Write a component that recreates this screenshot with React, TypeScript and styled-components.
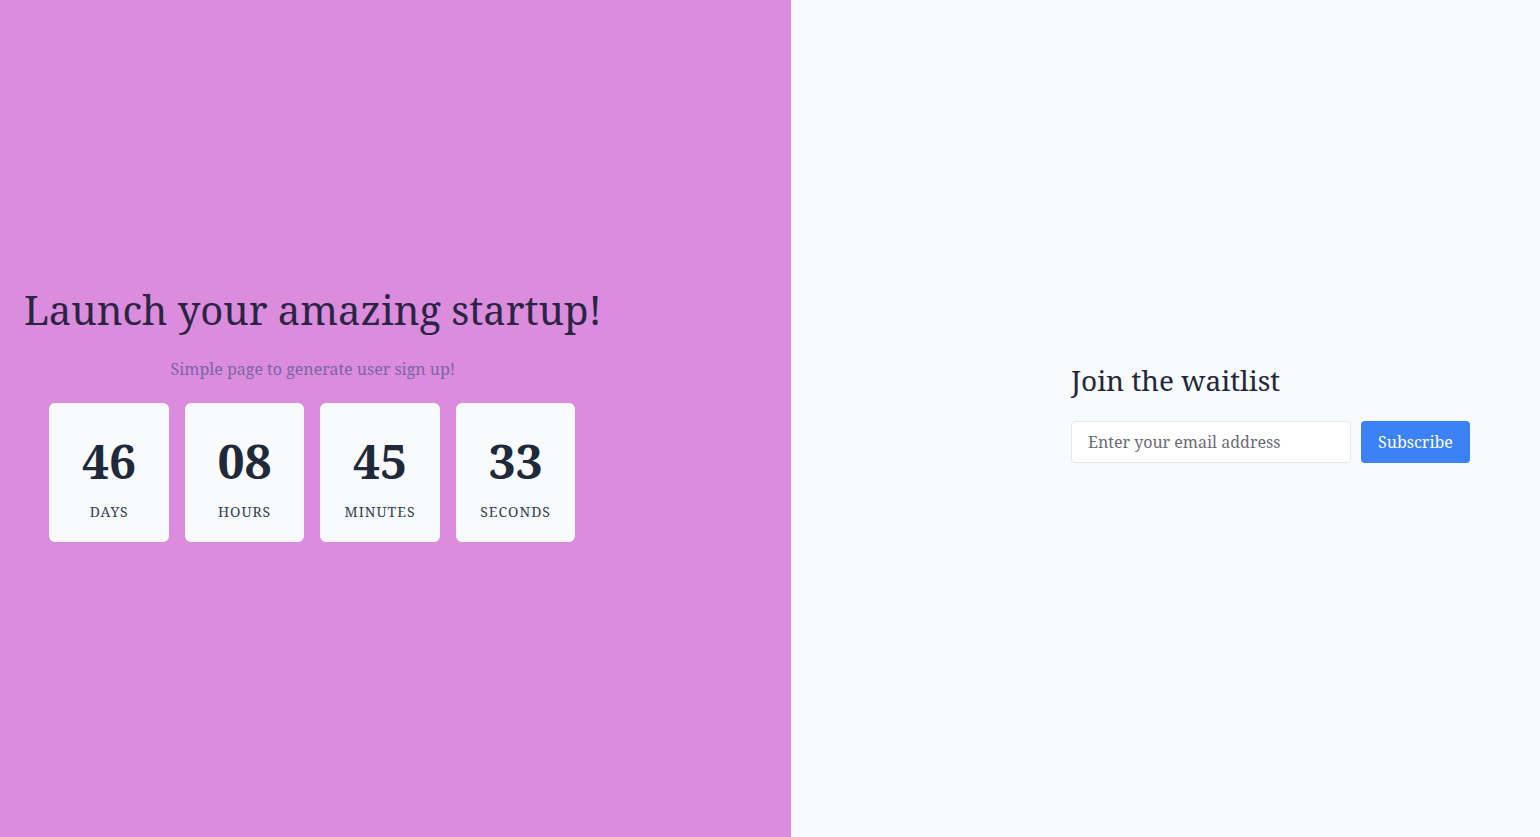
import React from "react";
import styled, { createGlobalStyle } from "styled-components";

const Global = createGlobalStyle`
  html, body { margin: 0; padding: 0; }
  body { font-family: "Noto Serif", "DejaVu Serif", "Liberation Serif", serif; }
  * { box-sizing: border-box; }
`;

const Page = styled.div`
  display: flex;
  width: 100%;
  height: 837px;
`;

const LeftPanel = styled.section`
  width: 791px;
  flex-shrink: 0;
  background: #dc8cdc;
  display: flex;
  align-items: center;
  padding-left: 24px;
`;

const Hero = styled.div`
  display: flex;
  flex-direction: column;
  align-items: center;
  margin-top: -9px;
`;

const Title = styled.h1`
  margin: 0;
  font-size: 40px;
  font-weight: 400;
  line-height: 1.2;
  letter-spacing: -0.05px;
  color: #2a2545;
`;

const Subtitle = styled.p`
  margin: 23px 0 0;
  font-size: 16px;
  line-height: 1.5;
  color: #7866a3;
`;

const Countdown = styled.div`
  display: flex;
  gap: 16px;
  margin-top: 22px;
  margin-right: 1px;
`;

const Card = styled.div`
  width: 119.5px;
  height: 139px;
  background: #f8fafc;
  border-radius: 6px;
  display: flex;
  flex-direction: column;
  align-items: center;
  padding-top: 34px;
`;

const Number = styled.span`
  font-size: 48px;
  font-weight: 700;
  line-height: 1;
  color: #1e293b;
`;

const Label = styled.span`
  margin-top: 17px;
  font-size: 14px;
  letter-spacing: 1px;
  color: #334155;
`;

const RightPanel = styled.section`
  flex: 1;
  background: #f8fafc;
  display: flex;
  align-items: center;
  padding-left: 280px;
`;

const Form = styled.div`
  display: flex;
  flex-direction: column;
  margin-top: -13px;
`;

const Heading = styled.h2`
  margin: 0;
  font-size: 28px;
  font-weight: 400;
  line-height: 1.4;
  color: #1e293b;
`;

const Row = styled.div`
  display: flex;
  gap: 10px;
  margin-top: 21px;
`;

const Input = styled.input`
  width: 280px;
  height: 42px;
  border: 1px solid #e2e8f0;
  border-radius: 4px;
  background: #ffffff;
  padding: 0 16px;
  font-family: inherit;
  font-size: 16px;
  color: #1e293b;
  outline: none;
  &::placeholder { color: #6b6b76; }
`;

const Button = styled.button`
  width: 109px;
  height: 42px;
  border: none;
  border-radius: 4px;
  background: #3b82f6;
  color: #ffffff;
  font-family: inherit;
  font-size: 16px;
  cursor: pointer;
`;

const units = [
  { value: "46", label: "DAYS" },
  { value: "08", label: "HOURS" },
  { value: "45", label: "MINUTES" },
  { value: "33", label: "SECONDS" },
];

export default function App() {
  return (
    <>
      <Global />
      <Page>
        <LeftPanel>
          <Hero>
            <Title>Launch your amazing startup!</Title>
            <Subtitle>Simple page to generate user sign up!</Subtitle>
            <Countdown>
              {units.map((u) => (
                <Card key={u.label}>
                  <Number>{u.value}</Number>
                  <Label>{u.label}</Label>
                </Card>
              ))}
            </Countdown>
          </Hero>
        </LeftPanel>
        <RightPanel>
          <Form>
            <Heading>Join the waitlist</Heading>
            <Row>
              <Input type="email" placeholder="Enter your email address" />
              <Button>Subscribe</Button>
            </Row>
          </Form>
        </RightPanel>
      </Page>
    </>
  );
}
